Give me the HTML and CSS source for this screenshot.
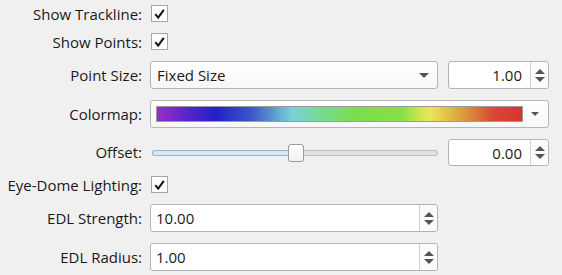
FILE: index.html
```html
<!DOCTYPE html>
<html>
<head>
<meta charset="utf-8">
<link rel="stylesheet" href="styles.css">
</head>
<body>
<div class="form">
  <div class="label">Show Trackline:</div>
  <div class="field"><span class="check"><svg viewBox="0 0 16 16" width="16" height="16"><path d="M3.5 8.2 L6.6 11.8 L12.6 3.6" fill="none" stroke="#111" stroke-width="2.2"/></svg></span></div>

  <div class="label">Show Points:</div>
  <div class="field"><span class="check"><svg viewBox="0 0 16 16" width="16" height="16"><path d="M3.5 8.2 L6.6 11.8 L12.6 3.6" fill="none" stroke="#111" stroke-width="2.2"/></svg></span></div>

  <div class="label">Point Size:</div>
  <div class="field split">
    <div class="combo"><span class="combo-text">Fixed Size</span><span class="tri"></span></div>
    <div class="spin right"><span class="spin-val">1.00</span><span class="spin-btns"><span class="up"></span><span class="down"></span></span></div>
  </div>

  <div class="label">Colormap:</div>
  <div class="field">
    <div class="combo cmap"><span class="grad"></span><span class="tri small"></span></div>
  </div>

  <div class="label">Offset:</div>
  <div class="field split">
    <div class="slider"><span class="groove-fill"></span><span class="groove-rest"></span><span class="handle"></span></div>
    <div class="spin right short"><span class="spin-val">0.00</span><span class="spin-btns"><span class="up"></span><span class="down"></span></span></div>
  </div>

  <div class="label">Eye-Dome Lighting:</div>
  <div class="field"><span class="check"><svg viewBox="0 0 16 16" width="16" height="16"><path d="M3.5 8.2 L6.6 11.8 L12.6 3.6" fill="none" stroke="#111" stroke-width="2.2"/></svg></span></div>

  <div class="label">EDL Strength:</div>
  <div class="field"><div class="spin wide"><span class="spin-val">10.00</span><span class="spin-btns"><span class="up"></span><span class="down"></span></span></div></div>

  <div class="label">EDL Radius:</div>
  <div class="field"><div class="spin wide"><span class="spin-val">1.00</span><span class="spin-btns"><span class="up"></span><span class="down"></span></span></div></div>
</div>
</body>
</html>
```
FILE: styles.css
```css
html, body {
  margin: 0;
  padding: 0;
  background: #f0f0f0;
  font-family: "Open Sans", "Noto Sans", sans-serif;
  font-size: 15px;
  color: #1a1a1a;
}
.form {
  display: grid;
  grid-template-columns: 142px 399px;
  grid-template-rows: 17px 17px 28px 28px 26px 17px 28px 28px;
  column-gap: 8px;
  row-gap: 11px;
  padding-top: 5px;
}
.label {
  display: flex;
  align-items: center;
  justify-content: flex-end;
  white-space: nowrap;
}
.field {
  display: flex;
  align-items: center;
}
.check {
  box-sizing: border-box;
  width: 17px;
  height: 17px;
  border: 1px solid #a6a6a6;
  background: #fff;
  display: flex;
  align-items: center;
  justify-content: center;
  margin-left: 1px;
}
.check svg { display: block; }
.split {
  display: grid;
  grid-template-columns: 288px 101px;
  column-gap: 10px;
  align-items: center;
}
.combo {
  box-sizing: border-box;
  height: 28px;
  border: 1px solid #b4b4b4;
  border-radius: 3px;
  background: linear-gradient(#fefefe, #f7f7f7);
  display: flex;
  align-items: center;
  padding-left: 6px;
  padding-right: 8px;
}
.combo-text { flex: 1; }
.tri {
  width: 0;
  height: 0;
  border-left: 5px solid transparent;
  border-right: 5px solid transparent;
  border-top: 5px solid #555;
}
.tri.small {
  border-left-width: 4px;
  border-right-width: 4px;
  border-top-width: 4px;
  margin-left: 8px;
  margin-right: 1px;
}
.cmap {
  width: 400px;
  padding-left: 5px;
}
.grad {
  flex: 1;
  height: 16px;
  box-sizing: border-box;
  border: 1px solid #9a9a9a;
  background: linear-gradient(to right,
    #9a2ec6 0%,
    #5a25c8 8%,
    #2320c8 16%,
    #3b57c6 26%,
    #78d2d8 37%,
    #76dc88 46%,
    #7ade4a 55%,
    #86e048 67%,
    #cce54e 72%,
    #eae656 75%,
    #dd9a3e 84%,
    #d64a32 92%,
    #d6342e 100%);
}
.spin {
  box-sizing: border-box;
  height: 28px;
  border: 1px solid #b4b4b4;
  border-radius: 3px;
  background: #fff;
  display: flex;
  align-items: stretch;
}
.spin.short { height: 27px; }
.spin.wide { width: 288px; }
.spin-val {
  flex: 1;
  display: flex;
  align-items: center;
  padding-left: 5px;
}
.spin.right .spin-val {
  justify-content: flex-end;
  padding-right: 8px;
}
.spin-btns {
  width: 17px;
  border-left: 1px solid #d0d0d0;
  display: flex;
  flex-direction: column;
  align-items: center;
  justify-content: center;
  gap: 3px;
  background: #fbfbfb;
  border-radius: 0 3px 3px 0;
}
.up, .down {
  width: 0;
  height: 0;
  border-left: 5px solid transparent;
  border-right: 5px solid transparent;
}
.up { border-bottom: 5px solid #555; }
.down { border-top: 5px solid #555; }
.slider {
  position: relative;
  height: 26px;
  display: flex;
  align-items: center;
  padding-left: 2px;
}
.groove-fill {
  box-sizing: border-box;
  width: 140px;
  height: 6px;
  border: 1px solid #9fb2c4;
  border-right: none;
  border-radius: 3px 0 0 3px;
  background: #d6e8f6;
}
.groove-rest {
  box-sizing: border-box;
  flex: 1;
  height: 6px;
  border: 1px solid #bdbdbd;
  border-left: none;
  border-radius: 0 3px 3px 0;
  background: #e2e2e2;
}
.handle {
  position: absolute;
  left: 138px;
  top: 4px;
  box-sizing: border-box;
  width: 16px;
  height: 18px;
  border: 1px solid #9c9c9c;
  border-radius: 3px;
  background: linear-gradient(#ffffff, #f0f0f0);
}
```
